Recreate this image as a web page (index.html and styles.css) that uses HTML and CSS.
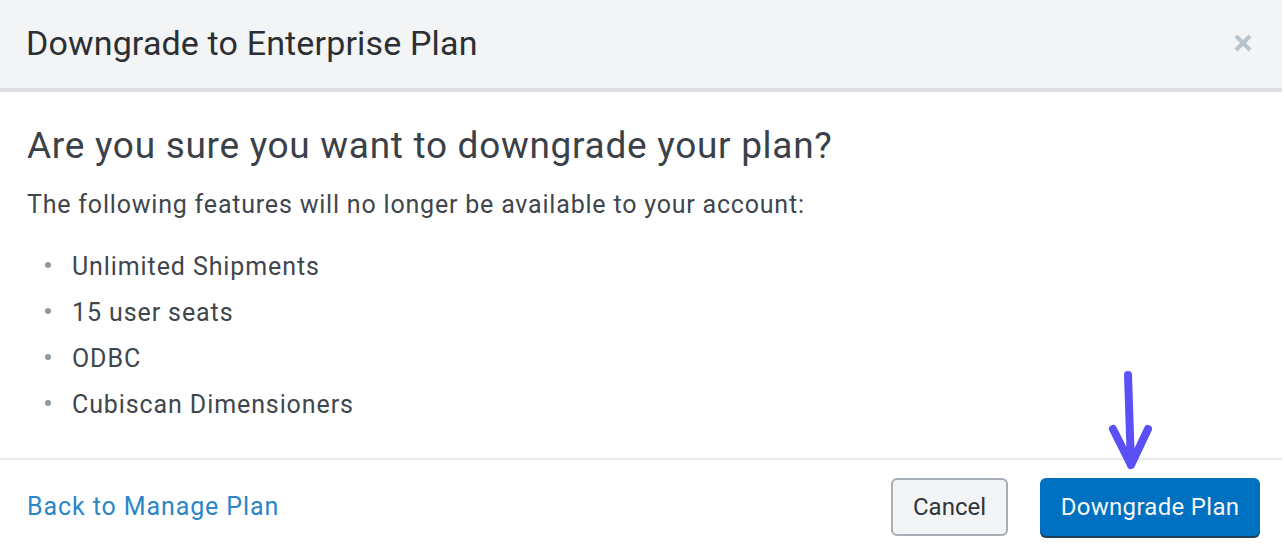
FILE: index.html
```html
<!DOCTYPE html>
<html>
<head>
<meta charset="utf-8">
<link rel="stylesheet" href="styles.css">
</head>
<body>
<div class="modal">
  <div class="modal-header">
    <h1 class="modal-title">Downgrade to Enterprise Plan</h1>
    <button class="close" aria-label="Close">
      <svg width="20" height="20" viewBox="0 0 20 20"><path d="M3 3 L17 17 M17 3 L3 17" stroke="#b9c3cc" stroke-width="4" stroke-linecap="butt"/></svg>
    </button>
  </div>
  <div class="modal-body">
    <h2 class="question">Are you sure you want to downgrade your plan?</h2>
    <p class="intro">The following features will no longer be available to your account:</p>
    <ul class="features">
      <li>Unlimited Shipments</li>
      <li>15 user seats</li>
      <li>ODBC</li>
      <li>Cubiscan Dimensioners</li>
    </ul>
  </div>
  <div class="modal-footer">
    <a class="back-link" href="#">Back to Manage Plan</a>
    <div class="actions">
      <button class="btn btn-cancel">Cancel</button>
      <button class="btn btn-primary">Downgrade Plan
        <svg class="arrow" width="60" height="110" viewBox="0 0 60 110"><path d="M24 6 L27 96 M9 60 L27 96 L44 60" fill="none" stroke="#5b50f6" stroke-width="8" stroke-linecap="round" stroke-linejoin="round"/></svg>
      </button>
    </div>
  </div>
</div>
</body>
</html>
```
FILE: styles.css
```css
* { box-sizing: border-box; }
html, body { margin: 0; padding: 0; background: #fff; }
body { font-family: Roboto, "Liberation Sans", sans-serif; color: #333b44; }
.modal { width: 1282px; height: 560px; display: flex; flex-direction: column; }
.modal-header {
  height: 92px;
  background: #f3f4f6;
  border-bottom: 4px solid #dcdee1;
  display: flex; align-items: center; justify-content: space-between;
  padding: 0 29px 3px 26px;
}
.modal-title { margin: 0; font-size: 34px; font-weight: 400; color: #2b2f33; letter-spacing: 0.15px; }
.close { background: none; border: 0; padding: 0; margin: 0; display: flex; }
.modal-body { padding: 27px 27px 0 27px; flex: 1; border-bottom: 2px solid #e6eaee; }
.question { margin: 0; font-size: 37px; font-weight: 400; color: #3b4148; line-height: 54px; letter-spacing: 0.7px; }
.intro { margin: 14px 0 0 0; font-size: 25px; color: #40464d; line-height: 36px; letter-spacing: 0.8px; }
.features { list-style: none; margin: 21px 0 0 0; padding: 0 0 0 18px; font-size: 25px; line-height: 46px; color: #40464d; letter-spacing: 0.9px; }
.features li { display: flex; align-items: center; }
.features li::before {
  content: ""; width: 6px; height: 6px; border-radius: 50%; background: #8e99a3;
  margin-right: 21px; margin-top: -4px; flex: none;
}
.modal-footer {
  height: 100px; display: flex; align-items: center; justify-content: space-between;
  padding: 0 22px 7px 27px;
}
.back-link { color: #2b86c8; text-decoration: none; font-size: 25px; letter-spacing: 0.9px; }
.actions { display: flex; gap: 32px; }
.btn { font-family: Roboto, "Liberation Sans", sans-serif; font-size: 24px; height: 58px; border-radius: 6px; }
.btn-cancel { width: 117px; background: #f3f4f6; border: 2px solid #a7aeb6; color: #30353b; }
.btn-primary {
  position: relative; width: 220px; background: #0070c0; border: 0; color: #f4f6f8;
  box-shadow: 0 2px 0 #1f3f5a; letter-spacing: 0.3px;
}
.arrow { position: absolute; left: 64px; top: -109px; }
```
